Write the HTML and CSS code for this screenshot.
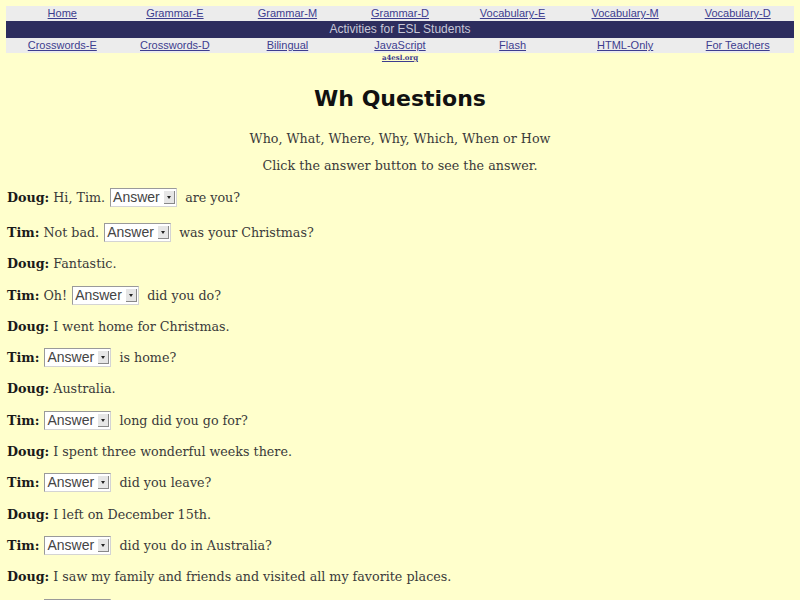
FILE: index.html
```html
<!DOCTYPE html>
<html lang="en">
<head>
  <meta charset="UTF-8">
  <title>Wh Questions</title>
  <link rel="stylesheet" href="styles.css">
</head>
<body>
  <!-- Site navigation -->
  <div class="nav">
    <div class="nav-row">
      <a href="#">Home</a>
      <a href="#">Grammar-E</a>
      <a href="#">Grammar-M</a>
      <a href="#">Grammar-D</a>
      <a href="#">Vocabulary-E</a>
      <a href="#">Vocabulary-M</a>
      <a href="#">Vocabulary-D</a>
    </div>
    <div class="nav-bar">Activities for ESL Students</div>
    <div class="nav-row">
      <a href="#">Crosswords-E</a>
      <a href="#">Crosswords-D</a>
      <a href="#">Bilingual</a>
      <a href="#">JavaScript</a>
      <a href="#">Flash</a>
      <a href="#">HTML-Only</a>
      <a href="#">For Teachers</a>
    </div>
    <div class="site"><a href="#">a4esl.org</a></div>
  </div>

  <h1>Wh Questions</h1>
  <p class="intro">Who, What, Where, Why, Which, When or How</p>
  <p class="intro">Click the answer button to see the answer.</p>

  <!-- Dialogue -->
  <div class="dialog">
    <p><b>Doug:</b> Hi, Tim. <span class="sel">Answer<i></i></span> are you?</p>
    <p><b>Tim:</b> Not bad. <span class="sel">Answer<i></i></span> was your Christmas?</p>
    <p><b>Doug:</b> Fantastic.</p>
    <p><b>Tim:</b> Oh! <span class="sel">Answer<i></i></span> did you do?</p>
    <p><b>Doug:</b> I went home for Christmas.</p>
    <p><b>Tim:</b> <span class="sel">Answer<i></i></span> is home?</p>
    <p><b>Doug:</b> Australia.</p>
    <p><b>Tim:</b> <span class="sel">Answer<i></i></span> long did you go for?</p>
    <p><b>Doug:</b> I spent three wonderful weeks there.</p>
    <p><b>Tim:</b> <span class="sel">Answer<i></i></span> did you leave?</p>
    <p><b>Doug:</b> I left on December 15th.</p>
    <p><b>Tim:</b> <span class="sel">Answer<i></i></span> did you do in Australia?</p>
    <p><b>Doug:</b> I saw my family and friends and visited all my favorite places.</p>
    <p><b>Tim:</b> <span class="sel">Answer<i></i></span> place did you like best?</p>
  </div>
</body>
</html>
```

FILE: styles.css
```css
/* Page */
body {
  margin: 0;
  padding: 6px 6px 0;
  background: #ffffcc;
  color: #3a3a3a;
  font-family: "DejaVu Serif", serif;
  font-size: 12.7px;
}

/* Navigation */
.nav-row {
  display: grid;
  grid-template-columns: repeat(7, 1fr);
  background: #ececec;
  height: 15px;
  line-height: 14px;
  text-align: center;
  font-family: "Liberation Sans", Arial, sans-serif;
  font-size: 11px;
}

.nav-row a {
  color: #3d3d8f;
}

.nav-bar {
  background: #2d2d5e;
  color: #c8c8d8;
  height: 17px;
  line-height: 17px;
  text-align: center;
  font-family: "Liberation Sans", Arial, sans-serif;
  font-size: 12px;
}

.site {
  text-align: center;
  font-size: 7px;
  font-weight: bold;
  line-height: 10px;
}

.site a {
  color: #3d3d8f;
}

/* Heading */
h1 {
  margin: 23px 0 0;
  text-align: center;
  font-family: "DejaVu Sans", sans-serif;
  font-size: 22px;
  color: #111;
}

.intro {
  text-align: center;
  margin: 20px 0 0;
  line-height: 16px;
}

.intro + .intro {
  margin-top: 11px;
}

/* Dialogue lines */
.dialog {
  margin-top: 8px;
}

.dialog p {
  margin: 0;
  padding: 6px 1px 6.3px;
  line-height: 19px;
}

.dialog p:first-child {
  padding-bottom: 10px;
}

.dialog b {
  color: #1a1a1a;
}

.sel {
  display: inline-block;
  position: relative;
  vertical-align: middle;
  box-sizing: border-box;
  width: 67px;
  height: 19px;
  margin: -2px 4px 0 1px;
  padding: 0 0 0 2px;
  background: #fff;
  border: 1px solid #9a9a9a;
  border-right-color: #d4d4d4;
  border-bottom-color: #d4d4d4;
  font-family: "Liberation Sans", Arial, sans-serif;
  font-size: 14px;
  line-height: 17px;
  color: #444;
}

/* Drop-down button */
.sel i {
  position: absolute;
  right: 1px;
  top: 2px;
  width: 10px;
  height: 12px;
  background: #e6e6e6;
  border-right: 1px solid #888;
  border-bottom: 1px solid #888;
}

.sel i::after {
  content: "";
  position: absolute;
  left: 3px;
  top: 5px;
  border-left: 2px solid transparent;
  border-right: 2px solid transparent;
  border-top: 3px solid #222;
}
```
